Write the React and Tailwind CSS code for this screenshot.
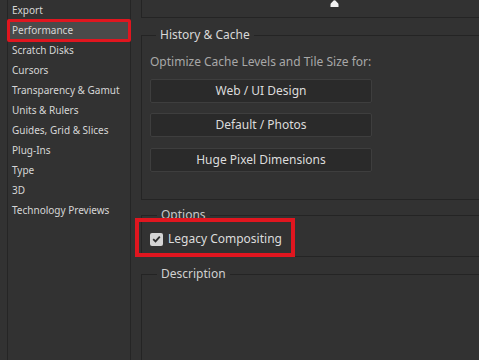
import React from "react";

const NAV = [
  "Export",
  "Performance",
  "Scratch Disks",
  "Cursors",
  "Transparency & Gamut",
  "Units & Rulers",
  "Guides, Grid & Slices",
  "Plug-Ins",
  "Type",
  "3D",
  "Technology Previews",
];

function PresetButton({ children, className = "" }) {
  return (
    <button className={`w-[222px] h-[24px] rounded-[2px] bg-[#2a2a2a] border border-[#3e3e3e] text-[12px] text-[#dcdcdc] flex items-center justify-center ${className}`}>
      {children}
    </button>
  );
}

export default function App() {
  return (
    <div className="relative w-[479px] h-[360px] overflow-hidden bg-[#323232] flex font-['Noto_Sans','Open_Sans',sans-serif]">
      {/* Sidebar */}
      <div className="ml-[7px] w-[124px] shrink-0 border-x border-[#252525] flex flex-col">
        {NAV.map((item) => (
          <div
            key={item}
            className={`h-[20px] pl-[4px] flex items-center text-[10px] text-[#d6d6d6] whitespace-nowrap ${
              item === "Performance" ? "bg-[#4a4a4a]" : ""
            }`}
          >
            {item}
          </div>
        ))}
      </div>

      {/* Content */}
      <div className="flex-1 pl-[10px] flex flex-col min-w-[360px]">
        {/* top panel (cut off) */}
        <div className="relative h-[18px] shrink-0 border-l border-b border-[#242424]">
          <svg className="absolute left-[188px] top-0" width="9" height="7" viewBox="0 0 9 7">
            <path d="M0.5 7 V4.5 Q0.5 3.5 1.5 2.8 L3.6 0.6 Q4.5 -0.2 5.4 0.6 L7.5 2.8 Q8.5 3.5 8.5 4.5 V7 Z" fill="#f2f2f2" />
          </svg>
        </div>

        {/* History & Cache */}
        <fieldset className="mt-[9px] h-[173px] shrink-0 border-l border-t border-b border-[#242424]">
          <legend className="ml-[14px] px-[4px] text-[12px] leading-[16px] text-[#d8d8d8]">History &amp; Cache</legend>
          <div className="pl-[8px] flex flex-col">
            <div className="mt-[11px] h-[16px] leading-[16px] text-[12px] text-[#a8a8a8] whitespace-nowrap">
              Optimize Cache Levels and Tile Size for:
            </div>
            <PresetButton className="mt-[9px]">Web / UI Design</PresetButton>
            <PresetButton className="mt-[10px]">Default / Photos</PresetButton>
            <PresetButton className="mt-[11px]">Huge Pixel Dimensions</PresetButton>
          </div>
        </fieldset>

        {/* Options */}
        <fieldset className="mt-[7px] h-[50px] shrink-0 border-l border-t border-b border-[#242424]">
          <legend className="ml-[15px] px-[4px] text-[12px] leading-[16px] text-[#c8c8c8]">Options</legend>
          <div className="pl-[8px] mt-[8px] h-[16px] flex items-center">
            <span className="w-[13px] h-[13px] rounded-[2px] bg-[#d4d4d4] flex items-center justify-center">
              <svg width="9" height="8" viewBox="0 0 9 8">
                <path d="M1.2 4.2 L3.5 6.4 L7.8 1.6" fill="none" stroke="#2e2e2e" strokeWidth="1.8" />
              </svg>
            </span>
            <span className="ml-[5px] text-[12px] text-[#dcdcdc] whitespace-nowrap">Legacy Compositing</span>
          </div>
        </fieldset>

        {/* Description */}
        <fieldset className="mt-[9px] flex-1 border-l border-t border-[#242424]">
          <legend className="ml-[15px] px-[4px] text-[12px] leading-[16px] text-[#d0d0d0]">Description</legend>
        </fieldset>
      </div>

      {/* annotation highlights */}
      <div className="absolute left-[7px] top-[19px] w-[124px] h-[23px] border-[3px] border-[#e0161f] rounded-[2px]" />
      <div className="absolute left-[135px] top-[218px] w-[160px] h-[39px] border-[4px] border-[#e0161f]" />
    </div>
  );
}
